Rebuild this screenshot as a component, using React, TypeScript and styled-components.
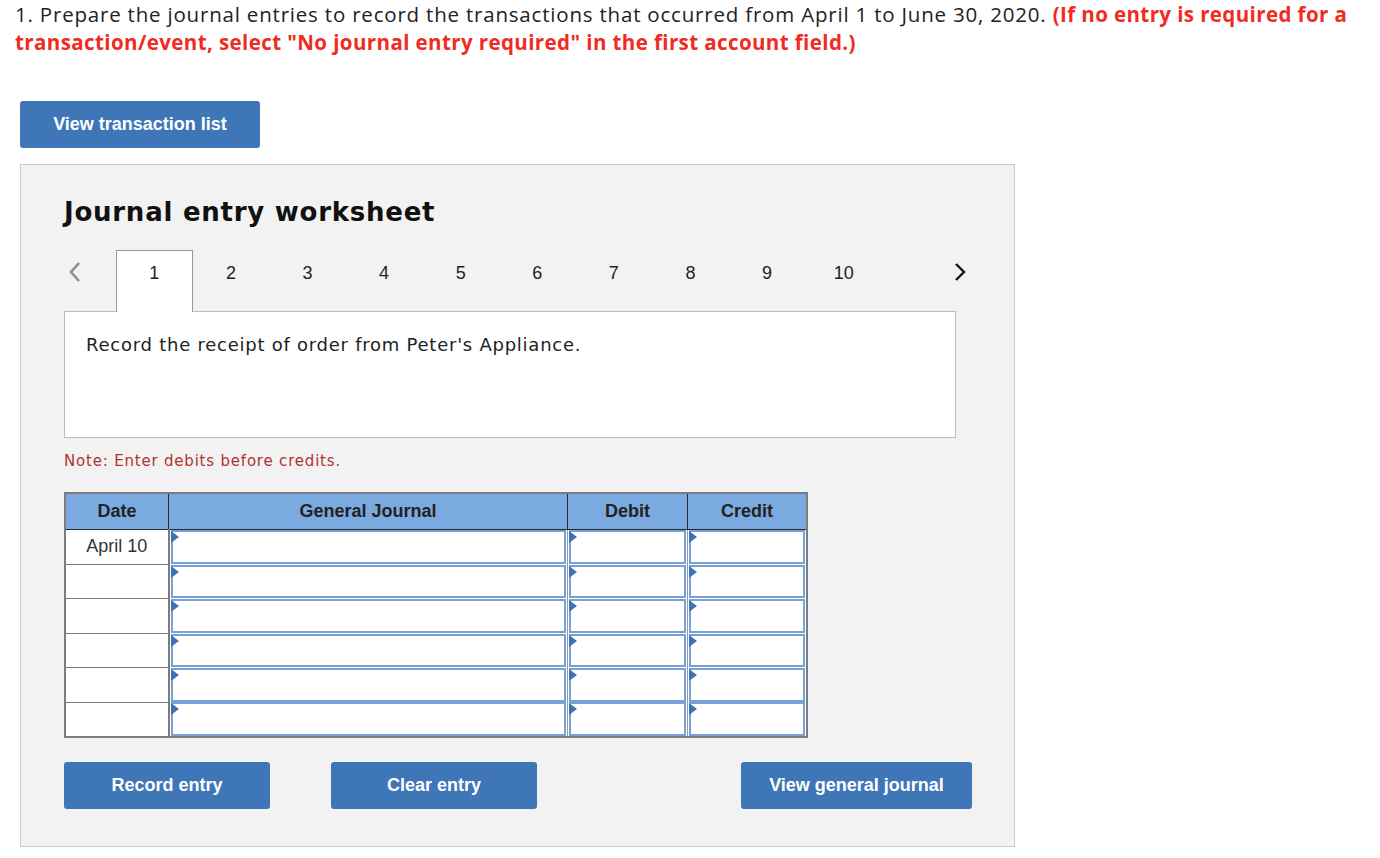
import React from "react";
import styled, { createGlobalStyle } from "styled-components";

const GlobalStyle = createGlobalStyle`
  body {
    margin: 0;
    background: #ffffff;
    font-family: "Liberation Sans", Arial, sans-serif;
  }
`;

const Page = styled.div`
  padding: 0 0 0 20px;
`;

const Question = styled.p`
  margin: 0 0 0 -5px;
  white-space: nowrap;
  font-family: "Open Sans", Lato, sans-serif;
  font-size: 20.5px;
  letter-spacing: 0.8px;
  line-height: 28px;
  color: #222;
`;

const Warning = styled.span`
  color: #ef2b22;
  font-weight: 700;
  letter-spacing: 0.4px;
`;

const Button = styled.button<{ $width: number }>`
  width: ${(p) => p.$width}px;
  height: 47px;
  border: none;
  border-radius: 3px;
  background: #3f76b8;
  color: #fff;
  font-family: "Liberation Sans", Arial, sans-serif;
  font-weight: 700;
  font-size: 18px;
  cursor: pointer;
`;

const TopButton = styled(Button)`
  margin-top: 45px;
  display: block;
`;

const Panel = styled.div`
  margin-top: 16px;
  width: 995px;
  box-sizing: border-box;
  background: #f2f2f2;
  border: 1px solid #c9c9c9;
  padding: 32px 42px 37px 43px;
`;

const Title = styled.h2`
  margin: 0;
  font-family: "DejaVu Sans", Verdana, sans-serif;
  font-weight: 700;
  font-size: 26px;
  letter-spacing: 0.75px;
  line-height: 30px;
  color: #111;
`;

const TabRow = styled.div`
  margin-top: 23px;
  display: flex;
  align-items: stretch;
  height: 61px;
`;

const Arrow = styled.div<{ $w: number; $offset: number }>`
  width: ${(p) => p.$w}px;
  flex-shrink: 0;
  display: flex;
  align-items: flex-start;
  padding: 11px 0 0 ${(p) => p.$offset}px;
  box-sizing: border-box;
`;

const Tab = styled.div<{ $active?: boolean }>`
  width: 76.6px;
  flex-shrink: 0;
  box-sizing: border-box;
  text-align: center;
  padding-top: 12px;
  font-family: "Liberation Sans", Arial, sans-serif;
  font-size: 18px;
  line-height: 20px;
  color: #222;
  position: relative;
  z-index: 1;
  background: ${(p) => (p.$active ? "#fff" : "transparent")};
  border: 1px solid ${(p) => (p.$active ? "#999" : "transparent")};
  border-bottom: none;
  margin-bottom: -1px;
`;

const Prompt = styled.div`
  width: 892px;
  height: 127px;
  box-sizing: border-box;
  background: #fff;
  border: 1px solid #bcbcbc;
  padding: 22px 21px;
  font-family: "DejaVu Sans", Verdana, sans-serif;
  font-size: 18px;
  letter-spacing: 0.75px;
  line-height: 22px;
  color: #222;
`;

const Note = styled.div`
  margin-top: 14px;
  font-family: "DejaVu Sans", Verdana, sans-serif;
  font-size: 15px;
  letter-spacing: 0.8px;
  line-height: 18px;
  color: #b3322f;
`;

const Table = styled.table`
  margin-top: 22px;
  border-collapse: collapse;
  table-layout: fixed;
  background: #fff;
  border: 2px solid #7c7c7c;
`;

const Th = styled.th<{ $w: number }>`
  width: ${(p) => p.$w}px;
  height: 35px;
  padding: 0;
  background: #7baae0;
  border-right: 1px solid #2b2b2b;
  border-bottom: 1px solid #2b2b2b;
  font-family: "Liberation Sans", Arial, sans-serif;
  font-size: 18px;
  font-weight: 700;
  color: #222;
  &:last-child {
    border-right: none;
  }
`;

const DateCell = styled.td`
  height: 33.5px;
  padding: 0;
  text-align: center;
  border-right: 2px solid #7c7c7c;
  border-bottom: 1px solid #7c7c7c;
  font-family: "Liberation Sans", Arial, sans-serif;
  font-size: 18px;
  color: #333;
`;

const InputCell = styled.td`
  padding: 0 1px;
  border-right: 1px solid #9a9a9a;
  &:last-child {
    border-right: none;
  }
`;

const Field = styled.div`
  position: relative;
  height: 33.5px;
  box-sizing: border-box;
  border: 2px solid #76a0d6;
  background: #fff;
  &::before {
    content: "";
    position: absolute;
    left: -2px;
    top: -1px;
    border-left: 8px solid #3d72b6;
    border-top: 6px solid transparent;
    border-bottom: 6px solid transparent;
  }
`;

const Actions = styled.div`
  margin-top: 24px;
  display: flex;
  gap: 61px;
`;

const LastAction = styled(Button)`
  margin-left: auto;
`;

const Chevron = ({ dir, color }: { dir: "left" | "right"; color: string }) => (
  <svg width="14" height="22" viewBox="0 0 14 22">
    <path
      d={dir === "left" ? "M11 2 L3 11 L11 20" : "M3 3 L11 11 L3 19"}
      fill="none"
      stroke={color}
      strokeWidth={dir === "left" ? 2.6 : 2.4}
    />
  </svg>
);

const rows = ["April 10", "", "", "", "", ""];

export default function App() {
  return (
    <Page>
      <GlobalStyle />
      <Question>
        1. Prepare the journal entries to record the transactions that occurred from April 1 to June 30,
        2020. <Warning>(If no entry is required for a<br />
        transaction/event, select "No journal entry required" in the first account field.)</Warning>
      </Question>
      <TopButton $width={240}>View transaction list</TopButton>
      <Panel>
        <Title>Journal entry worksheet</Title>
        <TabRow>
          <Arrow $w={52} $offset={4}>
            <Chevron dir="left" color="#8e8e8e" />
          </Arrow>
          {Array.from({ length: 10 }, (_, i) => (
            <Tab key={i} $active={i === 0}>
              {i + 1}
            </Tab>
          ))}
          <Arrow $w={90} $offset={71}>
            <Chevron dir="right" color="#111" />
          </Arrow>
        </TabRow>
        <Prompt>Record the receipt of order from Peter's Appliance.</Prompt>
        <Note>Note: Enter debits before credits.</Note>
        <Table>
          <thead>
            <tr>
              <Th $w={102}>Date</Th>
              <Th $w={398}>General Journal</Th>
              <Th $w={119}>Debit</Th>
              <Th $w={118}>Credit</Th>
            </tr>
          </thead>
          <tbody>
            {rows.map((d, i) => (
              <tr key={i}>
                <DateCell>{d}</DateCell>
                <InputCell>
                  <Field />
                </InputCell>
                <InputCell>
                  <Field />
                </InputCell>
                <InputCell>
                  <Field />
                </InputCell>
              </tr>
            ))}
          </tbody>
        </Table>
        <Actions>
          <Button $width={206}>Record entry</Button>
          <Button $width={206}>Clear entry</Button>
          <LastAction $width={231}>View general journal</LastAction>
        </Actions>
      </Panel>
    </Page>
  );
}
